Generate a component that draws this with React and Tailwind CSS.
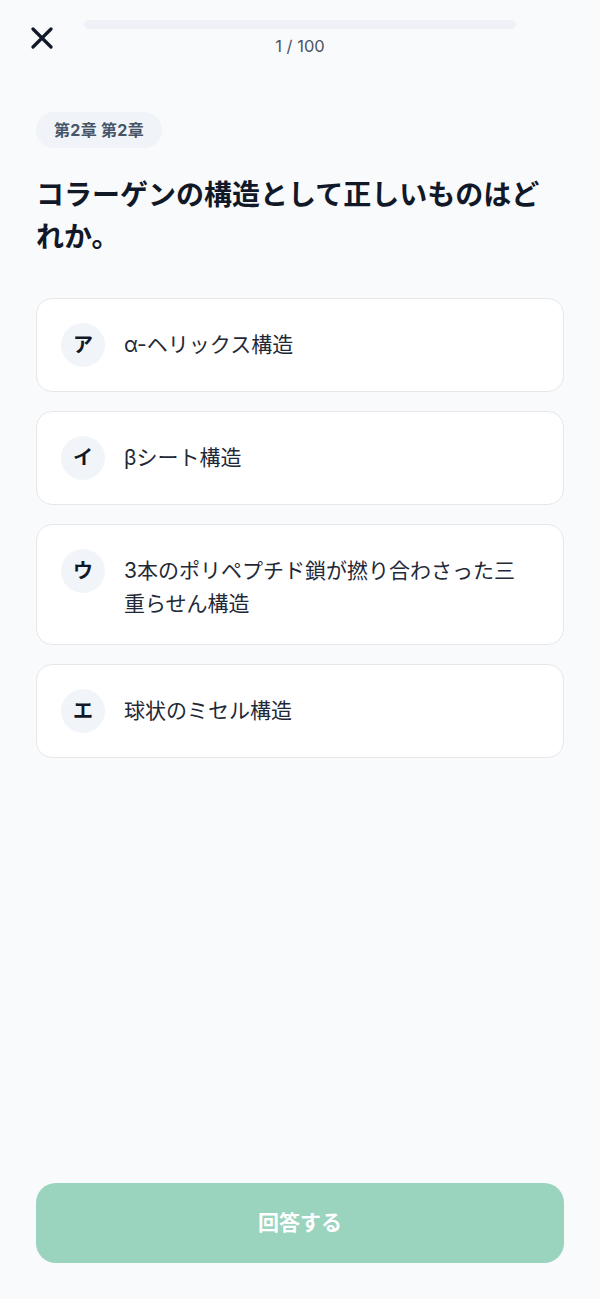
import React, { useState } from "react";

const options = [
  { key: "ア", text: "α-ヘリックス構造" },
  { key: "イ", text: "βシート構造" },
  { key: "ウ", text: "3本のポリペプチド鎖が撚り合わさった三重らせん構造" },
  { key: "エ", text: "球状のミセル構造" },
];

function CloseIcon() {
  return (
    <svg width="22" height="22" viewBox="0 0 22 22" fill="none">
      <path d="M2 2L20 20M20 2L2 20" stroke="#111827" strokeWidth="3.2" strokeLinecap="round" />
    </svg>
  );
}

export default function App() {
  const [selected, setSelected] = useState(null);

  return (
    <div
      className="min-h-screen h-[1299px] w-full bg-[#f9fafb] flex flex-col px-9"
      style={{ fontFamily: '"Inter", "Noto Sans CJK JP", sans-serif' }}
    >
      <div className="relative flex items-start pt-[20px] h-[80px]">
        <button className="absolute left-[-5px] top-[27px] p-0">
          <CloseIcon />
        </button>
        <div className="ml-[48px] mr-[48px] flex-1 flex flex-col items-center">
          <div className="w-full h-[9px] rounded-full bg-[#eef1f5]" />
          <div className="mt-[5px] text-[16.5px] leading-[24px] text-[#4b5563]">1 / 100</div>
        </div>
      </div>

      <div className="mt-[32px] flex">
        <span className="inline-flex items-center h-[36px] px-[18px] rounded-full bg-[#f0f4f8] text-[16px] font-bold text-[#475569] tracking-[0.3px]">
          第2章 第2章
        </span>
      </div>

      <h1 className="mt-[26px] text-[28px] leading-[42px] font-bold text-[#111827]">
        コラーゲンの構造として正しいものはどれか。
      </h1>

      <div className="mt-[40px] flex flex-col gap-[19px]">
        {options.map((o) => (
          <button
            key={o.key}
            onClick={() => setSelected(o.key)}
            className={
              "w-full text-left flex items-start gap-[19px] bg-white rounded-[16px] border pl-[24px] pr-[34px] py-[24px] " +
              (selected === o.key ? "border-[#34b38a]" : "border-[#e5e7eb]")
            }
          >
            <span className="shrink-0 w-[44px] h-[44px] rounded-full bg-[#f1f5f9] flex items-center justify-center text-[20px] font-bold text-[#111827]">
              {o.key}
            </span>
            <span className="pt-[5px] text-[21px] leading-[33px] text-[#1f2937]">{o.text}</span>
          </button>
        ))}
      </div>

      <div className="flex-1" />

      <button className="mb-[36px] w-full h-[80px] rounded-[20px] bg-[#9ad3be] text-white text-[21px] font-bold">
        回答する
      </button>
    </div>
  );
}
